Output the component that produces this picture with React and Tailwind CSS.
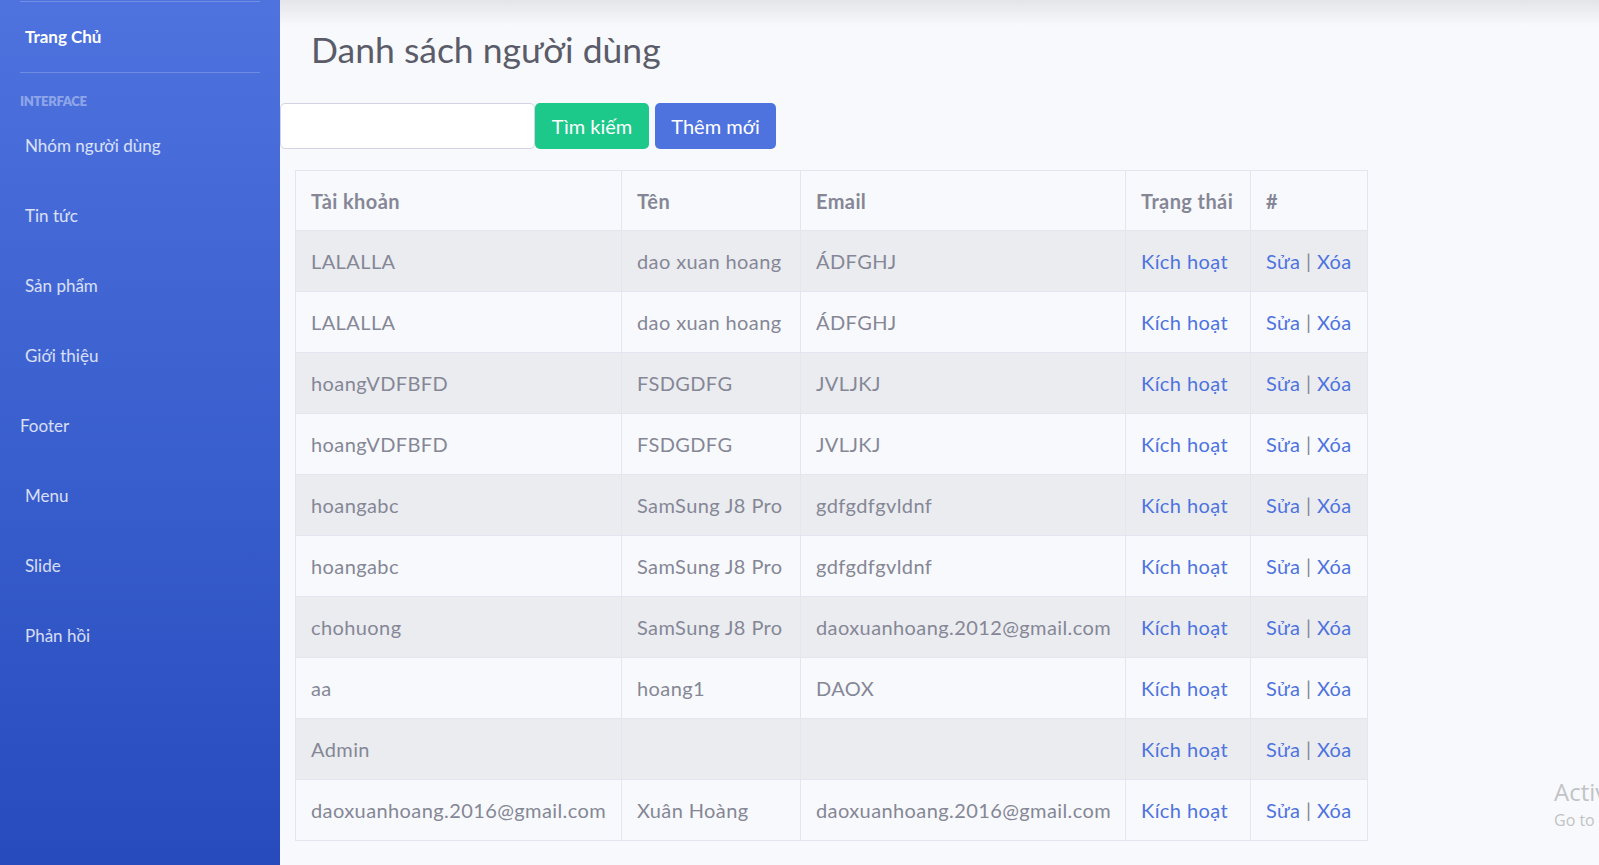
import React from 'react';

const font = { fontFamily: '"Lato", "Open Sans", sans-serif' };

const navItems = [
  { label: 'Nhóm người dùng', indent: true },
  { label: 'Tin tức', indent: true },
  { label: 'Sản phẩm', indent: true },
  { label: 'Giới thiệu', indent: true },
  { label: 'Footer', indent: false },
  { label: 'Menu', indent: true },
  { label: 'Slide', indent: true },
  { label: 'Phản hồi', indent: true },
];

const users = [
  { account: 'LALALLA', name: 'dao xuan hoang', email: 'ÁDFGHJ' },
  { account: 'LALALLA', name: 'dao xuan hoang', email: 'ÁDFGHJ' },
  { account: 'hoangVDFBFD', name: 'FSDGDFG', email: 'JVLJKJ' },
  { account: 'hoangVDFBFD', name: 'FSDGDFG', email: 'JVLJKJ' },
  { account: 'hoangabc', name: 'SamSung J8 Pro', email: 'gdfgdfgvldnf' },
  { account: 'hoangabc', name: 'SamSung J8 Pro', email: 'gdfgdfgvldnf' },
  { account: 'chohuong', name: 'SamSung J8 Pro', email: 'daoxuanhoang.2012@gmail.com' },
  { account: 'aa', name: 'hoang1', email: 'DAOX' },
  { account: 'Admin', name: '', email: '' },
  { account: 'daoxuanhoang.2016@gmail.com', name: 'Xuân Hoàng', email: 'daoxuanhoang.2016@gmail.com' },
];

const Sidebar = () => (
  <aside className="w-[280px] shrink-0 h-full bg-gradient-to-b from-[#4e73df] to-[#274bbd] flex flex-col">
    <div className="mx-5 border-t border-white/20 mt-px" />
    <a className="h-[70px] flex items-center pl-[25px] text-white font-bold text-[17px]">Trang Chủ</a>
    <div className="mx-5 border-t border-white/20" />
    <div className="pl-5 pt-[22px] pb-[3px] text-[13px] font-extrabold uppercase text-white/40 leading-none tracking-tight">
      Interface
    </div>
    <nav className="flex flex-col">
      {navItems.map((item) => (
        <a
          key={item.label}
          className={`h-[70px] flex items-center text-[17px] text-white/80 ${item.indent ? 'pl-[25px]' : 'pl-5'}`}
        >
          {item.label}
        </a>
      ))}
    </nav>
  </aside>
);

const cell = 'border border-[#e3e6f0] px-[15px] whitespace-nowrap';

const UserTable = () => (
  <table className="table-fixed border-collapse ml-[15px] w-[1072px] text-[20px] tracking-[0.4px] text-[#858796]">
    <colgroup>
      <col className="w-[326px]" />
      <col className="w-[179px]" />
      <col className="w-[325px]" />
      <col className="w-[125px]" />
      <col className="w-[117px]" />
    </colgroup>
    <thead>
      <tr className="h-[60px] bg-[#f8f9fc]">
        {['Tài khoản', 'Tên', 'Email', 'Trạng thái', '#'].map((h) => (
          <th key={h} className={`${cell} text-left font-bold`}>
            {h}
          </th>
        ))}
      </tr>
    </thead>
    <tbody>
      {users.map((u, i) => (
        <tr key={i} className={`h-[61px] ${i % 2 === 0 ? 'bg-[#ebecf0]' : 'bg-[#f8f9fc]'}`}>
          <td className={cell}>{u.account}</td>
          <td className={cell}>{u.name}</td>
          <td className={cell}>{u.email}</td>
          <td className={`${cell} text-[#4e73df]`}>Kích hoạt</td>
          <td className={cell}>
            <a className="text-[#4e73df]">Sửa</a> | <a className="text-[#4e73df]">Xóa</a>
          </td>
        </tr>
      ))}
    </tbody>
  </table>
);

export default function App() {
  return (
    <div className="relative flex h-[865px] w-full overflow-hidden bg-[#f8f9fc]" style={font}>
      <Sidebar />
      <main className="relative flex-1 flex flex-col">
        <div className="h-[26px] bg-gradient-to-b from-[#e4e5e9] to-[#f8f9fc]" />
        <h1 className="pl-[31px] text-[35.5px] leading-[48px] text-[#5a5c69]">Danh sách người dùng</h1>
        <div className="flex items-center mt-[29px]">
          <input className="w-[255px] h-[46px] bg-white border border-[#d1d3e2] rounded-[5px] outline-none" />
          <button className="w-[114px] h-[46px] bg-[#1cc88a] text-white text-[20px] rounded-[5px]">Tìm kiếm</button>
          <button className="ml-[6px] w-[121px] h-[46px] bg-[#4e73df] text-white text-[20px] rounded-[5px]">Thêm mới</button>
        </div>
        <div className="mt-[21px]">
          <UserTable />
        </div>
        <div
          className="absolute left-[1274px] top-[776px] text-[#c2c3c6] whitespace-nowrap"
          style={{ fontFamily: '"Open Sans", sans-serif' }}
        >
          <div className="text-[24px] leading-[32px]">Activate Windows</div>
          <div className="text-[16px] leading-[25px]">Go to Settings to activate Windows.</div>
        </div>
      </main>
    </div>
  );
}
